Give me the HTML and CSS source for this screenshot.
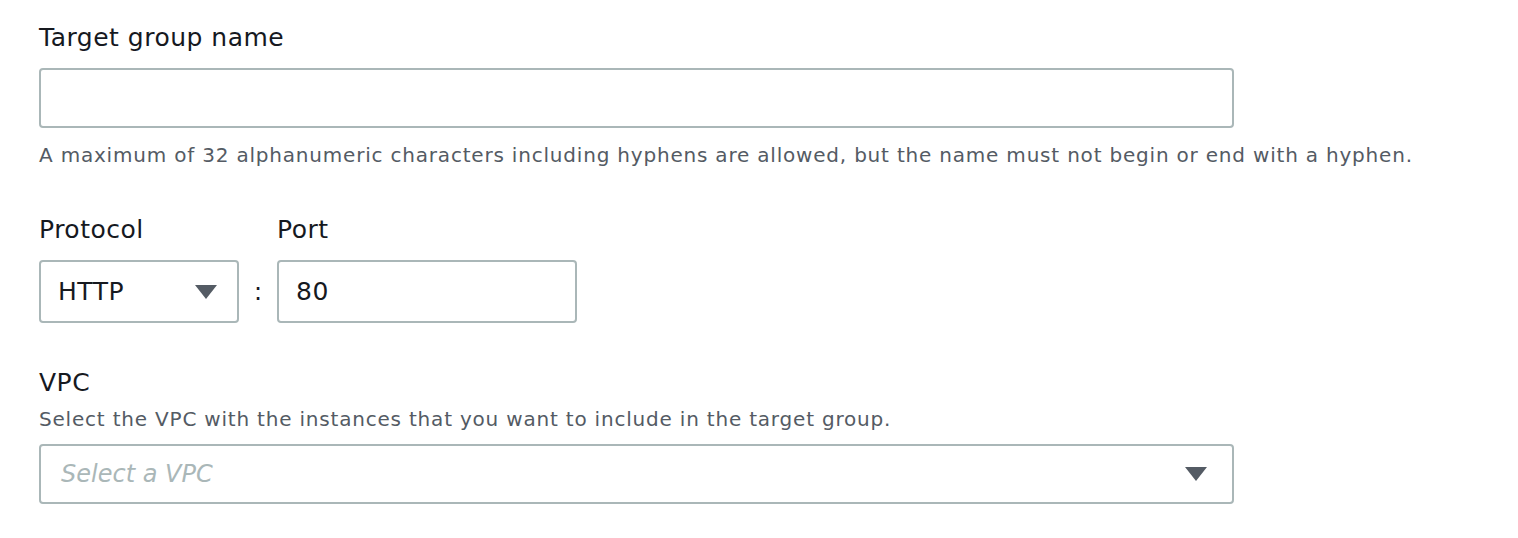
FILE: index.html
```html
<!DOCTYPE html>
<html>
<head>
<meta charset="utf-8">
<link rel="stylesheet" href="styles.css">
</head>
<body>
<div class="form">
  <div class="field">
    <label class="label">Target group name</label>
    <div class="input wide name"></div>
    <div class="hint">A maximum of 32 alphanumeric characters including hyphens are allowed, but the name must not begin or end with a hyphen.</div>
  </div>
  <div class="row">
    <div class="col">
      <label class="label">Protocol</label>
      <div class="select proto"><span class="value">HTTP</span><span class="caret"></span></div>
    </div>
    <div class="colon">:</div>
    <div class="col">
      <label class="label">Port</label>
      <div class="input port"><span class="value">80</span></div>
    </div>
  </div>
  <div class="field vpc">
    <label class="label">VPC</label>
    <div class="desc">Select the VPC with the instances that you want to include in the target group.</div>
    <div class="select wide vpcsel"><span class="placeholder">Select a VPC</span><span class="caret"></span></div>
  </div>
</div>
</body>
</html>
```
FILE: styles.css
```css
html, body {
  margin: 0;
  padding: 0;
  background: #ffffff;
}
body {
  font-family: "DejaVu Sans", "Open Sans", sans-serif;
  color: #16191f;
}
.form {
  padding: 23px 0 0 39px;
}
.label {
  display: block;
  font-size: 25px;
  letter-spacing: 0.5px;
  line-height: 30px;
  color: #16191f;
}
.input, .select {
  box-sizing: border-box;
  border: 2px solid #aab7b8;
  border-radius: 4px;
  background: #fff;
  display: flex;
  align-items: center;
}
.wide {
  width: 1195px;
  height: 60px;
}
.name {
  margin-top: 15px;
}
.hint {
  margin-top: 14px;
  font-size: 20px;
  letter-spacing: 0.8px;
  line-height: 26px;
  color: #545b64;
}
.row {
  display: flex;
  align-items: flex-end;
  margin-top: 47px;
}
.col .label {
  margin-bottom: 15px;
}
.proto {
  width: 200px;
  height: 63px;
  padding: 0 20px 0 17px;
  justify-content: space-between;
}
.colon {
  width: 38px;
  height: 63px;
  display: flex;
  align-items: center;
  justify-content: center;
  font-size: 24px;
}
.port {
  width: 300px;
  height: 63px;
  padding: 0 17px;
}
.value {
  font-size: 25px;
  letter-spacing: 0.5px;
}
.caret {
  width: 0;
  height: 0;
  border-left: 11px solid transparent;
  border-right: 11px solid transparent;
  border-top: 14px solid #545b64;
}
.vpc {
  margin-top: 45px;
}
.desc {
  margin-top: 8px;
  font-size: 20px;
  letter-spacing: 0.8px;
  line-height: 26px;
  color: #545b64;
}
.vpcsel {
  margin-top: 12px;
  padding: 0 25px 0 20px;
  justify-content: space-between;
}
.placeholder {
  font-size: 24px;
  font-style: italic;
  color: #aab7b8;
}
```
